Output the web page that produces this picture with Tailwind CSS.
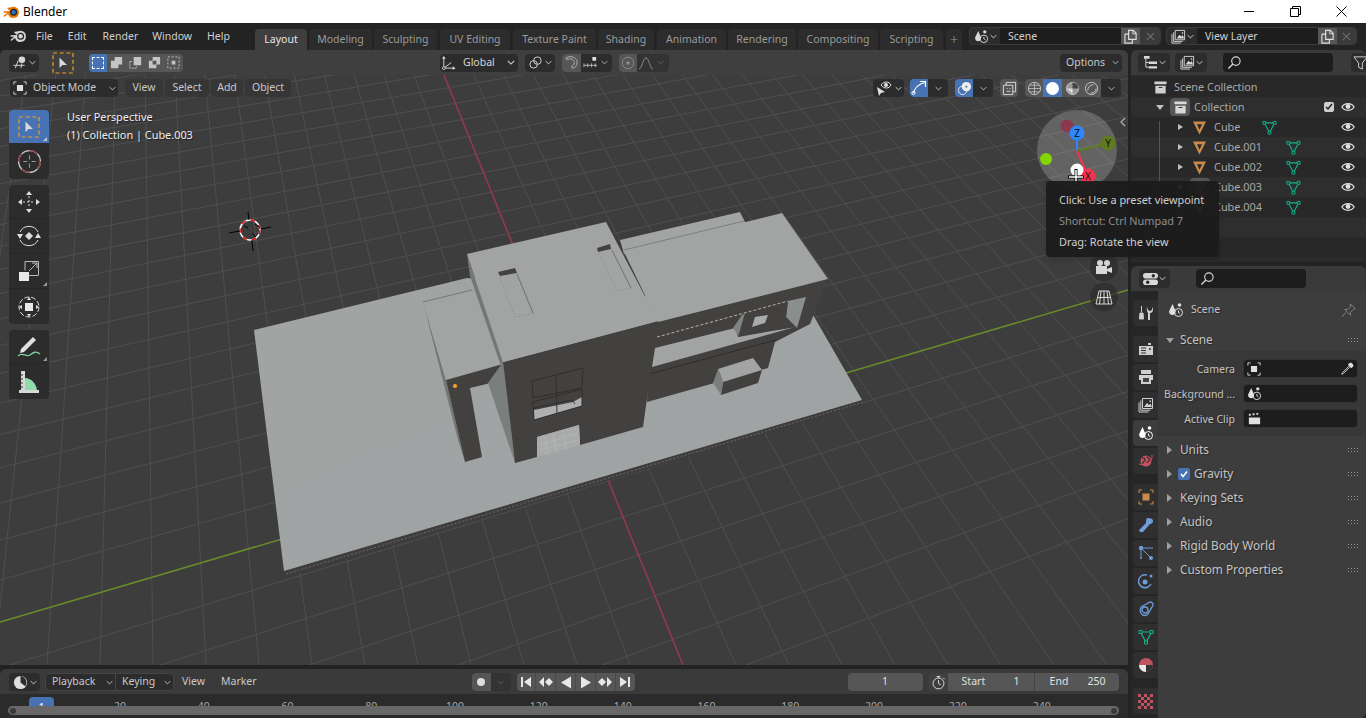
<!DOCTYPE html>
<html>
<head>
<meta charset="utf-8">
<title>Blender</title>
<script src="https://cdn.jsdelivr.net/npm/@tailwindcss/browser@4"></script>
</head>
<body class="relative w-[1366px] h-[718px] overflow-hidden bg-[#232323] flex flex-col text-[10.5px] text-[#c4c4c4] [font-family:'Noto_Sans',sans-serif]">

<!-- icon sheet -->
<svg class="hidden">
  <symbol id="chev" viewBox="0 0 10 6"><path d="M1 1l4 4 4-4" fill="none" stroke="currentColor" stroke-width="1.3"/></symbol>
  <symbol id="logo" viewBox="0 0 24 20"><path d="M15 2.5a8 8 0 1 1-8 10.5L2.5 16.5a1 1 0 0 1-1.4-1.6L6 11 1.5 11a1 1 0 0 1 0-2.2L10 8.5 6.5 5.6a1 1 0 0 1 1-1.8z" fill="currentColor"/><circle cx="15" cy="10.5" r="5" fill="#232323"/><circle cx="15" cy="10.5" r="3.2" fill="var(--dot,currentColor)"/></symbol>
  <symbol id="scene" viewBox="0 0 16 16"><path d="M4.5 2L7.5 9c.3 2.5-1.2 4-3.2 4S.8 11 1.2 9z" fill="currentColor"/><circle cx="11.5" cy="3" r="1.8" fill="currentColor"/><circle cx="10.5" cy="10.5" r="4" fill="none" stroke="currentColor"/><path d="M10.5 8.5v2l1.5 1" fill="none" stroke="currentColor"/></symbol>
  <symbol id="layer" viewBox="0 0 16 16"><path d="M4.5 1.5h10v10h-10z" fill="none" stroke="currentColor"/><path d="M6 10l3-4 2 2 1.5-1.5L14 10zM11.5 3.5h1.500v1.500h-1.500z" fill="currentColor"/><path d="M2.800 3.500v9.700h9.700M1 5.500V15h9.500" fill="none" stroke="currentColor"/></symbol>
  <symbol id="copy" viewBox="0 0 16 16"><path d="M6 1.500h5l3 3V11H6z M2 5.500h4M2 5.500V15h8v-4" fill="none" stroke="currentColor" stroke-width="1.200"/><path d="M10.500 1.500v3.500H14" fill="none" stroke="currentColor"/></symbol>
  <symbol id="xmark" viewBox="0 0 16 16"><path d="M3.500 3.500l9 9M12.500 3.500l-9 9" stroke="currentColor" stroke-width="1.300"/></symbol>
  <symbol id="search" viewBox="0 0 16 16"><circle cx="9.500" cy="6.500" r="4.500" fill="none" stroke="currentColor" stroke-width="1.200"/><path d="M6.300 9.700L1.500 14.500" stroke="currentColor" stroke-width="1.500"/></symbol>
  <symbol id="eye" viewBox="0 0 16 16"><path d="M1 8c3-5 11-5 14 0-3 5-11 5-14 0z" fill="none" stroke="currentColor" stroke-width="1.400"/><circle cx="8" cy="7.500" r="2.800" fill="currentColor"/></symbol>
  <symbol id="box" viewBox="0 0 16 16"><path d="M1.500 1.500h13v3h-13z M2.500 6h11v8.500h-11z" fill="currentColor"/><path d="M6 8h4" stroke="#333" stroke-width="1.200"/></symbol>
  <symbol id="tri" viewBox="0 0 16 16"><path d="M1 1.500h14L8 15.500zM5.300 4.500L8 10.500l2.700-6z" fill="currentColor" fill-rule="evenodd"/></symbol>
  <symbol id="mesh" viewBox="0 0 16 16"><path d="M2.500 3h11L8 13.500z" fill="none" stroke="currentColor" stroke-width="1.200"/><path d="M1 1.500h3v3H1zM12 1.500h3v3h-3zM6.500 12h3v3h-3z" fill="#2b2b2b" stroke="currentColor"/></symbol>
  <symbol id="obj" viewBox="0 0 16 16"><path d="M4.500 4.500h7v7h-7z" fill="currentColor"/><path d="M1 4V1h3M12 1h3v3M15 12v3h-3M4 15H1v-3" fill="none" stroke="currentColor"/></symbol>
  <symbol id="grip" viewBox="0 0 11 5"><path d="M0 0h1v1H0zM3 0h1v1H3zM6 0h1v1H6zM9 0h1v1H9zM0 3h1v1H0zM3 3h1v1H3zM6 3h1v1H6zM9 3h1v1H9z" fill="currentColor"/></symbol>
  <symbol id="axes" viewBox="0 0 16 16"><path d="M3 14V2M3 14L11 8M3 14h11" fill="none" stroke="currentColor"/><path d="M3 1l-2 3h4zM15.500 14l-3-2v4z" fill="currentColor"/><circle cx="3" cy="14" r="1.500" fill="#222" stroke="currentColor"/></symbol>
  <symbol id="selarrow" viewBox="0 0 22 22"><path d="M7.500 5.500v10.500l3-3h4.500z" fill="#d8d8d8"/><path d="M1 1h20v20H1z" fill="none" stroke="#f0a020" stroke-width="1.200" stroke-dasharray="4 2.700"/></symbol>
</svg>

<!-- title bar -->
<div class="h-[23px] shrink-0 bg-white flex items-center text-[12px] text-black">
  <svg class="w-[17px] h-[14px] ml-[3px] [--dot:#2a6fb8] text-[#ea7600]"><use href="#logo"/></svg>
  <span class="ml-[3px]">Blender</span>
  <div class="ml-auto mr-[2px] flex items-center text-[#111]">
    <div class="w-[46px] flex justify-center"><div class="w-[10px] h-px bg-black"></div></div>
    <div class="w-[46px] flex justify-center"><svg class="w-[11px] h-[11px]" viewBox="0 0 11 11"><path d="M.5 2.500h8v8h-8zM2.500 2.500v-2h8v8h-2" fill="none" stroke="#000"/></svg></div>
    <div class="w-[46px] flex justify-center"><svg class="w-[11px] h-[11px]" viewBox="0 0 11 11"><path d="M.5.500l10 10M10.500.500l-10 10" stroke="#000"/></svg></div>
  </div>
</div>

<!-- workspace bar -->
<div class="h-[27px] shrink-0 flex relative">
  <svg class="w-[17px] h-[14px] ml-[10px] mt-[6px] text-[#d6d6d6] [--dot:#d6d6d6]"><use href="#logo"/></svg>
  <div class="flex h-[27px] items-center text-[#d0d0d0] pt-[1px]">
    <span class="ml-[9px]">File</span><span class="ml-[15px]">Edit</span><span class="ml-[16px]">Render</span><span class="ml-[14px]">Window</span><span class="ml-[15px]">Help</span>
  </div>
  <div class="absolute left-[255px] top-[6px] flex gap-[2px] h-[21px] text-[#9a9a9a]">
    <div class="w-[52px] rounded-t-[4px] bg-[#3f3f3f] text-[#e6e6e6] flex items-center justify-center">Layout</div>
    <div class="w-[63px] rounded-t-[4px] bg-[#2c2c2c] flex items-center justify-center">Modeling</div>
    <div class="w-[63px] rounded-t-[4px] bg-[#2c2c2c] flex items-center justify-center">Sculpting</div>
    <div class="w-[70px] ml-px rounded-t-[4px] bg-[#2c2c2c] flex items-center justify-center">UV Editing</div>
    <div class="w-[83px] ml-px rounded-t-[4px] bg-[#2c2c2c] flex items-center justify-center">Texture Paint</div>
    <div class="w-[56px] rounded-t-[4px] bg-[#2c2c2c] flex items-center justify-center">Shading</div>
    <div class="w-[69px] ml-px rounded-t-[4px] bg-[#2c2c2c] flex items-center justify-center">Animation</div>
    <div class="w-[68px] rounded-t-[4px] bg-[#2c2c2c] flex items-center justify-center">Rendering</div>
    <div class="w-[80px] rounded-t-[4px] bg-[#2c2c2c] flex items-center justify-center">Compositing</div>
    <div class="w-[63px] rounded-t-[4px] bg-[#2c2c2c] flex items-center justify-center">Scripting</div>
    <div class="w-[16px] ml-px rounded-t-[4px] bg-[#2c2c2c] flex items-center justify-center text-[15px] font-light">+</div>
  </div>
  <!-- scene / view layer selectors -->
  <div class="absolute left-[969px] top-[4px] flex gap-[5px] h-[18px]">
    <div class="w-[192px] flex rounded-[4px] overflow-hidden bg-[#2c2c2c] border border-[#3a3a3a]">
      <div class="w-[30px] flex items-center justify-center gap-[1px] text-[#d8d8d8]"><svg class="w-[15px] h-[15px]"><use href="#scene"/></svg><svg class="w-[7px] h-[5px]"><use href="#chev"/></svg></div>
      <div class="w-[121px] bg-[#1d1d1d] pl-[8px] pt-[2px] flex items-center text-[#d0d0d0]">Scene</div>
      <div class="w-[19px] bg-[#565656] flex items-center justify-center text-[#e0e0e0]"><svg class="w-[15px] h-[15px]"><use href="#copy"/></svg></div>
      <div class="flex-1 bg-[#3a3a3a] flex items-center justify-center text-[#6e6e6e]"><svg class="w-[13px] h-[13px]"><use href="#xmark"/></svg></div>
    </div>
    <div class="w-[191px] flex rounded-[4px] overflow-hidden bg-[#2c2c2c] border border-[#3a3a3a]">
      <div class="w-[30px] flex items-center justify-center gap-[1px] text-[#d8d8d8]"><svg class="w-[15px] h-[15px]"><use href="#layer"/></svg><svg class="w-[7px] h-[5px]"><use href="#chev"/></svg></div>
      <div class="w-[121px] bg-[#1d1d1d] pl-[8px] pt-[2px] flex items-center text-[#d0d0d0]">View Layer</div>
      <div class="w-[19px] bg-[#565656] flex items-center justify-center text-[#e0e0e0]"><svg class="w-[15px] h-[15px]"><use href="#copy"/></svg></div>
      <div class="flex-1 bg-[#3a3a3a] flex items-center justify-center text-[#6e6e6e]"><svg class="w-[13px] h-[13px]"><use href="#xmark"/></svg></div>
    </div>
  </div>
</div>

<!-- main area -->
<div class="flex-1 flex gap-[3px] min-h-0">

  <!-- left column: viewport + timeline -->
  <div class="w-[1128px] flex flex-col gap-[4px]">
    <div class="relative h-[615px] rounded-t-[6px] overflow-hidden bg-[#3d3d3d]">
      <svg class="absolute inset-0 w-[1128px] h-[615px]" viewBox="0 50 1128 615">
        <g id="grid" stroke="#4f4f4f" stroke-width="1"></g>
        <line x1="444" y1="75" x2="683" y2="665" stroke="#96384a" stroke-width="1.500"/>
        <line x1="0" y1="622" x2="1128" y2="290" stroke="#688a28" stroke-width="1.500"/>
        <!-- base plate -->
        <defs><linearGradient id="pl" x1="0" y1="0" x2="1" y2="1"><stop offset="0" stop-color="#a2a4a4"/><stop offset="1" stop-color="#9fa3a3"/></linearGradient></defs>
        <polygon points="284,571 286,577 862,405 862,400" fill="#3f3d3b"/>
        <path d="M286,574 L862,402.500" stroke="#6a6a6a" stroke-dasharray="2 2" fill="none"/>
        <polygon points="254,330 467,278 812,313 862,400 284,571" fill="url(#pl)"/>
        <!-- rear roof strip -->
        <polygon points="620,240 740,212 746,224 624,254" fill="#a2a4a4"/>
        <line x1="624" y1="250" x2="744" y2="221" stroke="#7d7f7f"/>
        <!-- right block, dark front -->
        <polygon points="655,322 828,279 810,324 775,342 768,368 647,402 650,340" fill="#43413f"/>
        <polygon points="655,348 735,328 738,337 795,327 652,367" fill="#a2a4a4"/>
        <line x1="649" y1="374" x2="776" y2="340" stroke="#2e2d2c"/>
        <polygon points="733,328 742,315 746,313 739,337" fill="#7f8482"/>
        <polygon points="745,313 778,303 776,327 738,337" fill="#43413f"/>
        <polygon points="755,317 768,315 765,323 752,327" fill="#a8abab"/>
        <polygon points="788,301 806,297 797,328 786,317" fill="#8a8f8d"/>
        <polygon points="778,303 788,301 786,317 795,327 776,330" fill="#43413f"/>
        <polygon points="624,252 782,213 828,279 658,322" fill="#a2a4a4"/>
        <path d="M657,337 L788,301" stroke="#cfcfcf" stroke-dasharray="3 2" stroke-width=".8" fill="none"/>
        <!-- small box -->
        <polygon points="718,369 753,358 762,370 723,382" fill="#a2a4a4"/>
        <polygon points="723,382 762,370 758,383 721,395" fill="#43413f"/>
        <polygon points="718,369 723,382 721,395 713,383" fill="#7a7f7d"/>
        <!-- canopy -->
        <polygon points="423,302 446,380 465,462 458,440" fill="#737775"/>
        <polygon points="423,302 472,290 503,362 446,380" fill="#a2a4a4"/>
        <path d="M423,302 L472,290" stroke="#757777"/>
        <polygon points="446,380 503,364 503,380 470,388 482,457 465,462" fill="#43413f"/>
        <polygon points="488,383 503,362 515,463" fill="#7a7f7d"/>
        <!-- main block -->
        <polygon points="467,254 503,362 503,372 470,276" fill="#737775"/>
        <polygon points="503,362 658,321 643,427 580,445 579,425 537,437 537,457 515,463" fill="#43413f"/>
        <polygon points="537,437 579,425 580,445 537,457" fill="#a9abab"/>
        <path d="M545,437L548,456M553,434L557,454M563,431L566,451M540,445L578,433M540,450L578,440" stroke="#c4c4c4" stroke-width=".7" stroke-dasharray="1 1"/>
        <polygon points="467,254 606,222 658,321 503,362" fill="#a2a4a4"/>
        <!-- skylights -->
        <polygon points="498,272 515,268 517,273 500,276" fill="#43413f"/>
        <path d="M517,274L533,313" stroke="#6e6f6f"/>
        <path d="M533,313L515,317M500,277L515,317" stroke="#8b8d8d" stroke-dasharray="1.500 2"/>
        <polygon points="597,248 610,244 611,249 598,252" fill="#43413f"/>
        <path d="M612,250L631,288" stroke="#6e6f6f"/>
        <path d="M631,288L617,291M599,253L617,291" stroke="#8b8d8d" stroke-dasharray="1.500 2"/>
        <!-- windows -->
        <polygon points="534,410 573,402 582,397 582,406 534,420" fill="#aeb0b0"/>
        <path d="M532,381L583,368L582,388L533,398ZM533,402L582,389L582,406L534,420ZM556,375L557,413M534,408L572,400L575,404" fill="none" stroke="#2f2e2d"/>
        <circle cx="455" cy="386" r="2.500" fill="#f5a030" stroke="#222" stroke-width=".6"/>
        <!-- 3d cursor -->
        <circle cx="250" cy="230" r="10" fill="none" stroke="#fff" stroke-width="1.500"/>
        <circle cx="250" cy="230" r="10" fill="none" stroke="#e01010" stroke-width="1.500" stroke-dasharray="4.500 5"/>
        <path d="M229,233L240,231M248,212L249,220M261,229L271,227M252,240L253,251M244,226L248,228M252,233L256,237M255,224L259,227" stroke="#000" stroke-width="1"/>
        <!-- gizmo -->
        <circle cx="1077" cy="150" r="40" fill="#fff" fill-opacity=".2"/>
        <circle cx="1067" cy="126" r="6.500" fill="#8a3a4c"/>
        <path d="M1077,150V133" stroke="#2e86ff" stroke-width="2"/>
        <path d="M1077,151L1108,143" stroke="#5f7a1f" stroke-width="2"/>
        <path d="M1077,151L1088,176" stroke="#f5334f" stroke-width="2"/>
        <circle cx="1046" cy="159" r="6" fill="#84d600"/>
        <circle cx="1077" cy="133" r="7.500" fill="#2e86ff"/>
        <circle cx="1108" cy="143" r="7.500" fill="#5f7a1f"/>
        <circle cx="1088" cy="176" r="7.500" fill="#f5334f"/>
        <circle cx="1077" cy="170" r="6.500" fill="#fff"/>
        <text x="1077" y="137" text-anchor="middle" font-size="10" fill="#111">Z</text>
        <text x="1108" y="147" text-anchor="middle" font-size="10" fill="#111">Y</text>
        <text x="1088" y="180" text-anchor="middle" font-size="10" fill="#111">X</text>
        <path d="M1068,177H1084M1076,169V185" stroke="#000" stroke-width="3"/>
        <path d="M1069,177H1083M1076,170V184" stroke="#fff" stroke-width="1.500"/>
        <!-- nav buttons -->
        <circle cx="1104" cy="205" r="14" fill="#2c2c2c" fill-opacity=".7"/>
        <circle cx="1104" cy="235" r="14" fill="#2c2c2c" fill-opacity=".7"/>
        <circle cx="1104" cy="267" r="14" fill="#2c2c2c" fill-opacity=".7"/>
        <circle cx="1104" cy="297" r="14" fill="#2c2c2c" fill-opacity=".7"/>
        <path d="M1096,266h11v8h-11zM1107,269l5-2v6l-5-2z" fill="#d8d8d8"/><circle cx="1100" cy="263" r="3" fill="#d8d8d8"/><circle cx="1107" cy="263" r="3" fill="#d8d8d8"/>
        <path d="M1099,291h10l3,13h-16zM1104,291v13M1097.500,297.500h13M1101,291l-1.500,13M1107,291l1.500,13" fill="none" stroke="#d8d8d8"/>
        <path d="M1125,118l-4,4 4,4" fill="none" stroke="#b0b0b0" stroke-width="1.200"/>
      </svg>

      <!-- tool header -->
      <div class="relative h-[25px] bg-[#3f3f3f] flex items-center">
        <div class="ml-[9px] w-[30px] h-[18px] rounded-[4px] bg-[#2c2c2c] flex items-center justify-center gap-[1px] text-[#d8d8d8]">
          <svg class="w-[16px] h-[15px]" viewBox="0 0 16 16"><path d="M1 11h12M3 14l3-8M9 14l1-5" stroke="currentColor" fill="none"/><circle cx="10" cy="5" r="3.500" fill="currentColor"/></svg>
          <svg class="w-[7px] h-[5px]"><use href="#chev"/></svg>
        </div>
        <svg class="ml-[13px] w-[22px] h-[22px]"><use href="#selarrow"/></svg>
        <div class="ml-[15px] w-[94px] h-[18px] rounded-[4px] overflow-hidden flex bg-[#565656] text-[#d8d8d8]">
          <div class="w-[18px] bg-[#4772b3] flex items-center justify-center"><div class="w-[12px] h-[12px] border border-dashed border-white"></div></div>
          <div class="flex-1 flex items-center justify-center"><svg class="w-[15px] h-[15px]" viewBox="0 0 16 16"><path d="M6 2h8v8H10v4H2V6h4z" fill="#c4c4c4"/></svg></div>
          <div class="flex-1 flex items-center justify-center"><svg class="w-[15px] h-[15px]" viewBox="0 0 16 16"><path d="M6 2h8v9H6z" fill="#c4c4c4"/><path d="M2 7h3M2 7v7h7v-2" fill="none" stroke="#c4c4c4" stroke-dasharray="2 1"/></svg></div>
          <div class="flex-1 flex items-center justify-center"><svg class="w-[15px] h-[15px]" viewBox="0 0 16 16"><path d="M6 2h8v8H10v4H2V6h4zM6 6v4h4V6z" fill="#c4c4c4" fill-rule="evenodd"/></svg></div>
          <div class="flex-1 flex items-center justify-center"><svg class="w-[15px] h-[15px]" viewBox="0 0 16 16"><path d="M6 6h4v4H6z" fill="#c4c4c4"/><path d="M2 2h12v12H2z" fill="none" stroke="#c4c4c4" stroke-dasharray="2 2"/></svg></div>
        </div>
        <div class="ml-[257px] w-[78px] h-[18px] rounded-[4px] bg-[#2c2c2c] flex items-center text-[#d8d8d8]">
          <svg class="w-[15px] h-[15px] ml-[1px]"><use href="#axes"/></svg><span class="ml-[7px]">Global</span><svg class="w-[8px] h-[5px] ml-auto mr-[3px]"><use href="#chev"/></svg>
        </div>
        <div class="ml-[7px] w-[30px] h-[18px] rounded-[4px] bg-[#2c2c2c] flex items-center justify-center gap-[2px] text-[#d8d8d8]">
          <svg class="w-[15px] h-[15px]" viewBox="0 0 16 16"><circle cx="6" cy="10" r="4" fill="none" stroke="currentColor"/><circle cx="10" cy="6" r="4" fill="none" stroke="currentColor"/></svg>
          <svg class="w-[7px] h-[5px]"><use href="#chev"/></svg>
        </div>
        <div class="ml-[7px] w-[50px] h-[18px] rounded-[4px] bg-[#2c2c2c] overflow-hidden flex items-center text-[#b8b8b8]">
          <div class="w-[19px] h-full bg-[#565656] flex items-center justify-center"><svg class="w-[15px] h-[15px]" viewBox="0 0 16 16"><path d="M2 3c6-3 12 0 12 5 0 3-2 6-5 6l-1-2c2-1 3-2 3-4 0-3-4-5-8-3z" fill="none" stroke="currentColor"/></svg></div>
          <svg class="w-[15px] h-[15px] ml-[2px]" viewBox="0 0 16 16"><path d="M1 11h14M1 9v4M5 9v4M9 9v4M13 9v4" stroke="currentColor" fill="none"/><path d="M10 2h4v4h-4z" fill="#e0e0e0"/></svg>
          <svg class="w-[7px] h-[5px] ml-[3px]"><use href="#chev"/></svg>
        </div>
        <div class="ml-[7px] w-[50px] h-[18px] rounded-[4px] bg-[#333] overflow-hidden flex items-center text-[#8e8e8e]">
          <div class="w-[18px] h-full bg-[#565656] flex items-center justify-center"><svg class="w-[14px] h-[14px]" viewBox="0 0 16 16"><circle cx="8" cy="8" r="6.500" fill="none" stroke="currentColor"/><circle cx="8" cy="8" r="2" fill="currentColor"/></svg></div>
          <svg class="w-[16px] h-[16px] ml-[1px]" viewBox="0 0 16 16"><path d="M1 14c3 0 4-11 7-11s4 11 7 11" fill="none" stroke="currentColor"/></svg>
          <svg class="w-[7px] h-[5px] ml-[3px] text-[#666]"><use href="#chev"/></svg>
        </div>
        <div class="ml-[391px] w-[62px] h-[18px] rounded-[4px] bg-[#2c2c2c] flex items-center text-[#c8c8c8]">
          <span class="ml-[6px]">Options</span><svg class="w-[7px] h-[5px] ml-auto mr-[3px]"><use href="#chev"/></svg>
        </div>
      </div>

      <!-- viewport header row -->
      <div class="relative mt-[4px] h-[18px] flex items-stretch text-[#c8c8c8]">
        <div class="ml-[10px] w-[108px] rounded-[4px] bg-[#2c2c2c] flex items-center">
          <svg class="w-[14px] h-[14px] ml-[3px] text-[#e0e0e0]"><use href="#obj"/></svg><span class="ml-[6px]">Object Mode</span><svg class="w-[7px] h-[5px] ml-auto mr-[2px]"><use href="#chev"/></svg>
        </div>
        <div class="ml-[7px] w-[38px] rounded-[4px] bg-[#363636] flex items-center justify-center">View</div>
        <div class="ml-[2px] w-[44px] rounded-[4px] bg-[#363636] flex items-center justify-center">Select</div>
        <div class="ml-[2px] w-[32px] rounded-[4px] bg-[#363636] flex items-center justify-center">Add</div>
        <div class="ml-[2px] w-[46px] rounded-[4px] bg-[#363636] flex items-center justify-center">Object</div>

        <div class="ml-[582px] w-[31px] rounded-[4px] bg-[#2c2c2c] flex items-center justify-center gap-[3px] text-[#e0e0e0]">
          <svg class="w-[17px] h-[15px]" viewBox="0 0 17 15"><path d="M6 4c3-4 8-4 10 0-2 4-7 4-10 0z" fill="none" stroke="currentColor"/><circle cx="11" cy="4" r="2" fill="currentColor"/><path d="M2 6l2 9 2-3 4-1z" fill="currentColor"/></svg>
          <svg class="w-[7px] h-[5px]"><use href="#chev"/></svg>
        </div>
        <div class="ml-[6px] w-[38px] rounded-[4px] overflow-hidden bg-[#2c2c2c] flex items-center">
          <div class="w-[18px] h-full bg-[#4772b3] flex items-center justify-center"><svg class="w-[16px] h-[16px]" viewBox="0 0 16 16"><path d="M2.500 13C4 7 8 4 14 2.500M9 1.500h5.500V7" fill="none" stroke="#fff" stroke-width="1.200"/><circle cx="2.500" cy="13" r="1.600" fill="none" stroke="#fff"/></svg></div>
          <svg class="w-[7px] h-[5px] mx-auto"><use href="#chev"/></svg>
        </div>
        <div class="ml-[7px] w-[38px] rounded-[4px] overflow-hidden bg-[#2c2c2c] flex items-center">
          <div class="w-[18px] h-full bg-[#4772b3] flex items-center justify-center"><svg class="w-[15px] h-[15px]" viewBox="0 0 16 16"><circle cx="10" cy="6" r="5" fill="#eee"/><circle cx="6" cy="10" r="4.500" fill="none" stroke="#eee"/><path d="M9 5h2v2H9z" fill="#4772b3"/></svg></div>
          <svg class="w-[7px] h-[5px] mx-auto"><use href="#chev"/></svg>
        </div>
        <div class="ml-[7px] w-[18px] rounded-[4px] bg-[#565656] flex items-center justify-center"><svg class="w-[15px] h-[15px]" viewBox="0 0 16 16"><path d="M4.500 4.500v-3h10v10h-3M1.500 4.500h10v10h-10z" fill="none" stroke="#ddd"/><path d="M5 8h1M8 8h1M5 11h4" stroke="#ddd"/></svg></div>
        <div class="ml-[7px] w-[96px] rounded-[4px] overflow-hidden bg-[#2c2c2c] flex items-center">
          <div class="w-[18px] h-full bg-[#565656] flex items-center justify-center"><svg class="w-[15px] h-[15px]" viewBox="0 0 16 16"><circle cx="8" cy="8" r="6.500" fill="none" stroke="#ccc"/><path d="M1.500 8h13M8 1.500v13M3 4.500h10M3 11.500h10" fill="none" stroke="#ccc" stroke-width=".8"/></svg></div>
          <div class="w-[19px] h-full bg-[#4772b3] flex items-center justify-center"><div class="w-[13px] h-[13px] rounded-full bg-white"></div></div>
          <div class="w-[20px] h-full bg-[#565656] flex items-center justify-center"><svg class="w-[15px] h-[15px]" viewBox="0 0 16 16"><circle cx="8" cy="8" r="6.500" fill="#999" stroke="#ccc"/><path d="M8 1.500v6.500h6.500A6.500 6.500 0 0 0 8 1.500z" fill="#444"/><path d="M2 8h6v6" fill="#ddd"/></svg></div>
          <div class="w-[19px] h-full bg-[#565656] flex items-center justify-center"><svg class="w-[15px] h-[15px]" viewBox="0 0 16 16"><circle cx="8" cy="8" r="6.500" fill="none" stroke="#ccc"/><path d="M4 10a6 6 0 0 1 6-6M7 13a6 6 0 0 0 6-5" fill="none" stroke="#ccc"/></svg></div>
          <svg class="w-[7px] h-[5px] mx-auto"><use href="#chev"/></svg>
        </div>
      </div>

      <!-- toolbar -->
      <div class="absolute left-[9px] top-[60px] w-[40px] flex flex-col gap-[6px] text-[#d8d8d8]">
        <div class="flex flex-col rounded-[4px] overflow-hidden bg-[#2c2c2c]">
          <div class="h-[33px] bg-[#4772b3] flex items-center justify-center relative">
            <svg class="w-[22px] h-[22px]"><use href="#selarrow"/></svg>
            <div class="absolute right-[2px] bottom-[2px] w-0 h-0 border-l-[4px] border-b-[4px] border-l-transparent border-b-[#b8c8e0]"></div>
          </div>
          <div class="h-[36px] flex items-center justify-center">
            <svg class="w-[25px] h-[25px]" viewBox="0 0 24 24"><circle cx="12" cy="12" r="10.500" fill="none" stroke="#c4c4c4" stroke-width="1.200"/><circle cx="12" cy="12" r="10.500" fill="none" stroke="#8e3a40" stroke-width="1.200" stroke-dasharray="8 8.500"/><path d="M12 6v4M12 14v4M6 12h4M14 12h4" stroke="#999"/></svg>
          </div>
        </div>
        <div class="flex flex-col rounded-[4px] overflow-hidden bg-[#2c2c2c] divide-y divide-[#262626]">
          <div class="h-[34px] flex items-center justify-center"><svg class="w-[24px] h-[24px]" viewBox="0 0 24 24"><path d="M12 1l3 4H9zM12 23l-3-4h6zM1 12l4-3v6zM23 12l-4 3V9z" fill="#ddd"/><path d="M12 6v12M6 12h12" stroke="#ddd" stroke-dasharray="2 2"/></svg></div>
          <div class="h-[35px] flex items-center justify-center"><svg class="w-[24px] h-[24px]" viewBox="0 0 24 24"><path d="M3 8a10 10 0 0 1 18 0M21 16a10 10 0 0 1-18 0" fill="none" stroke="#ddd"/><path d="M12 8l4 4-4 4-4-4zM0 10h6l-3 5zM18 14h6l-3-5z" fill="#ddd"/></svg></div>
          <div class="h-[35px] flex items-center justify-center relative"><svg class="w-[22px] h-[22px]" viewBox="0 0 22 22"><path d="M7 1.500h13.500v13.500" fill="none" stroke="#bbb"/><path d="M1 12h10v9H1z" fill="#e8e8e8"/><path d="M7 1.500v9M11 15.500h9.500M11 11l8-8M14 3h5v5" fill="none" stroke="#bbb"/></svg><div class="absolute right-[2px] bottom-[2px] w-0 h-0 border-l-[4px] border-b-[4px] border-l-transparent border-b-[#999]"></div></div>
          <div class="h-[35px] flex items-center justify-center"><svg class="w-[24px] h-[24px]" viewBox="0 0 24 24"><path d="M8 8h8v8H8z" fill="#e8e8e8"/><circle cx="12" cy="12" r="10" fill="none" stroke="#ddd" stroke-dasharray="5 2"/><path d="M12 2l2 3h-4zM12 22l-2-3h4zM2 12l3-2v4zM22 12l-3 2v-4z" fill="#ddd"/></svg></div>
        </div>
        <div class="flex flex-col rounded-[4px] overflow-hidden bg-[#2c2c2c] divide-y divide-[#262626]">
          <div class="h-[34px] flex items-center justify-center relative"><svg class="w-[26px] h-[26px]" viewBox="0 0 26 26"><path d="M5 15L17 3l3 3L8 18l-4 1z" fill="#e0e0e0"/><path d="M2 22c4-5 8 2 12-1s6-4 10-1" fill="none" stroke="#7fd0a0" stroke-width="1.300"/></svg><div class="absolute right-[2px] bottom-[2px] w-0 h-0 border-l-[4px] border-b-[4px] border-l-transparent border-b-[#999]"></div></div>
          <div class="h-[35px] flex items-center justify-center"><svg class="w-[24px] h-[24px]" viewBox="0 0 24 24"><path d="M4 1h4v19H4zM2 20h20v3H2z" fill="#d8d8d8"/><path d="M8 8c6 0 11 5 12 12H8z" fill="#8fdcac"/><path d="M4 5h2M4 9h2M4 13h2M4 17h2" stroke="#333"/></svg></div>
        </div>
      </div>

      <!-- view name -->
      <div class="absolute left-[67px] top-[58px] text-[10.9px] leading-[18px] text-[#eeeeee] [text-shadow:1px_1px_1px_#222]">
        <div>User Perspective</div>
        <div>(1) Collection | Cube.003</div>
      </div>
    </div>

    <!-- timeline -->
    <div class="h-[49px] rounded-t-[6px] overflow-hidden flex flex-col bg-[#2b2b2b]">
      <div class="h-[25px] shrink-0 pt-[1px] bg-[#3a3a3a] flex items-center text-[#c8c8c8]">
        <div class="ml-[9px] w-[31px] h-[18px] rounded-[4px] bg-[#2c2c2c] flex items-center justify-center gap-[2px] text-[#ddd]">
          <svg class="w-[15px] h-[15px]" viewBox="0 0 16 16"><circle cx="8" cy="8" r="7" fill="currentColor"/><path d="M8 1v7l5 4A7 7 0 0 0 8 1z" fill="#2c2c2c"/></svg>
          <svg class="w-[7px] h-[5px]"><use href="#chev"/></svg>
        </div>
        <div class="ml-[5px] w-[129px] h-[18px] rounded-[4px] bg-[#2c2c2c] border border-[#444] flex">
          <div class="w-[70px] flex items-center border-r border-[#444]"><span class="ml-[6px]">Playback</span><svg class="w-[7px] h-[5px] ml-auto mr-[2px]"><use href="#chev"/></svg></div>
          <div class="flex-1 flex items-center"><span class="ml-[6px]">Keying</span><svg class="w-[7px] h-[5px] ml-auto mr-[2px]"><use href="#chev"/></svg></div>
        </div>
        <span class="ml-[8px]">View</span>
        <span class="ml-[16px]">Marker</span>
        <div class="ml-[215px] w-[39px] h-[18px] rounded-[4px] overflow-hidden bg-[#333] flex">
          <div class="w-[19px] bg-[#565656] flex items-center justify-center"><div class="w-[8px] h-[8px] rounded-full bg-[#ddd]"></div></div>
          <div class="flex-1 flex items-center justify-center text-[#666]"><svg class="w-[7px] h-[5px]"><use href="#chev"/></svg></div>
        </div>
        <div class="ml-[6px] w-[118px] h-[18px] rounded-[4px] overflow-hidden bg-[#565656] flex text-[#e8e8e8] divide-x divide-[#4a4a4a]">
          <div class="flex-1 flex items-center justify-center"><svg class="w-[12px] h-[12px]" viewBox="0 0 12 12"><path d="M1 1h2v10H1zM11 1v10L4 6z" fill="currentColor"/></svg></div>
          <div class="flex-1 flex items-center justify-center"><svg class="w-[16px] h-[12px]" viewBox="0 0 16 12"><path d="M7 6l4-4 4 4-4 4zM6 1v10L1 6z" fill="currentColor"/></svg></div>
          <div class="flex-1 flex items-center justify-center"><svg class="w-[12px] h-[13px]" viewBox="0 0 12 12"><path d="M11 0v12L1 6z" fill="currentColor"/></svg></div>
          <div class="flex-1 flex items-center justify-center"><svg class="w-[12px] h-[13px]" viewBox="0 0 12 12"><path d="M1 0v12l10-6z" fill="currentColor"/></svg></div>
          <div class="flex-1 flex items-center justify-center"><svg class="w-[16px] h-[12px]" viewBox="0 0 16 12"><path d="M9 6L5 2 1 6l4 4zM10 1v10l5-5z" fill="currentColor"/></svg></div>
          <div class="flex-1 flex items-center justify-center"><svg class="w-[12px] h-[12px]" viewBox="0 0 12 12"><path d="M11 1H9v10h2zM1 1v10l7-5z" fill="currentColor"/></svg></div>
        </div>
        <div class="ml-[213px] w-[75px] h-[18px] rounded-[4px] bg-[#565656] flex items-center justify-center text-[#e0e0e0]">1</div>
        <div class="ml-[6px] w-[190px] h-[18px] rounded-[4px] overflow-hidden bg-[#565656] flex text-[#e0e0e0]">
          <div class="w-[19px] bg-[#3f3f3f] flex items-center justify-center"><svg class="w-[15px] h-[15px]" viewBox="0 0 16 16"><circle cx="8" cy="9" r="5.800" fill="none" stroke="currentColor"/><path d="M8 5.500V9l2.500 1.500M6 1.500h4M8 1.500v2M13 3l1.500 1.500" fill="none" stroke="currentColor"/></svg></div>
          <div class="w-[87px] flex items-center justify-between px-[14px] border-r border-[#444]"><span>Start</span><span>1</span></div>
          <div class="flex-1 flex items-center justify-between pl-[15px] pr-[13px]"><span>End</span><span>250</span></div>
        </div>
      </div>
      <div class="relative flex-1 overflow-hidden">
        <div class="flex ml-[78px] pt-[5px] text-[#a8a8a8]">
          <span class="w-[83.800px] text-center">20</span><span class="w-[83.800px] text-center">40</span><span class="w-[83.800px] text-center">60</span><span class="w-[83.800px] text-center">80</span><span class="w-[83.800px] text-center">100</span><span class="w-[83.800px] text-center">120</span><span class="w-[83.800px] text-center">140</span><span class="w-[83.800px] text-center">160</span><span class="w-[83.800px] text-center">180</span><span class="w-[83.800px] text-center">200</span><span class="w-[83.800px] text-center">220</span><span class="w-[83.800px] text-center">240</span>
        </div>
        <div class="absolute left-[29px] top-[3px] w-[25px] h-[12px] pt-[3px] rounded-t-[4px] bg-[#4772b3] text-center text-white leading-[14px]">1</div>
        <div class="absolute left-[8px] top-[12px] w-[1111px] h-[9px] rounded-full bg-[#686868] flex items-center justify-between px-[2px]">
          <div class="w-[6px] h-[6px] rounded-full bg-[#3a3a3a]"></div><div class="w-[6px] h-[6px] rounded-full bg-[#3a3a3a]"></div>
        </div>
      </div>
    </div>
  </div>

  <!-- right column: outliner + properties -->
  <div class="flex-1 flex flex-col gap-[4px] min-w-0">
    <!-- outliner -->
    <div class="h-[212px] rounded-t-[6px] overflow-hidden bg-[#2b2b2b] flex flex-col">
      <div class="h-[25px] shrink-0 bg-[#3a3a3a] flex items-center text-[#d8d8d8]">
        <div class="ml-[7px] shrink-0 w-[32px] h-[19px] rounded-[4px] bg-[#2c2c2c] flex items-center justify-center gap-[1px]">
          <svg class="w-[15px] h-[15px]" viewBox="0 0 16 16"><path d="M1 1h6v3H1zM6 7h9v2.500H6zM6 12h9v2.500H6z" fill="currentColor"/><path d="M3 4v9h3M3 8h3" fill="none" stroke="currentColor"/></svg>
          <svg class="w-[7px] h-[5px]"><use href="#chev"/></svg>
        </div>
        <div class="ml-[5px] shrink-0 w-[32px] h-[19px] rounded-[4px] bg-[#2c2c2c] flex items-center justify-center gap-[1px]">
          <svg class="w-[15px] h-[15px]"><use href="#layer"/></svg>
          <svg class="w-[7px] h-[5px]"><use href="#chev"/></svg>
        </div>
        <div class="ml-[16px] shrink-0 w-[110px] h-[19px] rounded-[4px] bg-[#1d1d1d] flex items-center">
          <svg class="w-[15px] h-[15px] ml-[4px]"><use href="#search"/></svg>
        </div>
        <div class="ml-[18px] shrink-0 w-[24px] h-[19px] rounded-l-[4px] bg-[#2c2c2c] flex items-center pl-[2px]">
          <svg class="w-[15px] h-[15px]" viewBox="0 0 16 16"><path d="M1 2h14L10 8.500V15l-4-2V8.500z" fill="none" stroke="currentColor"/></svg>
        </div>
      </div>
      <div class="h-[2px] shrink-0"></div>
      <div class="relative flex flex-col text-[10.9px] leading-[16px] text-[#a8a8a8]">
        <div class="h-[20px] flex items-center bg-[#282828]">
          <svg class="ml-[22px] w-[15px] h-[15px] text-[#d0d0d0]"><use href="#box"/></svg>
          <span class="ml-[6px]">Scene Collection</span>
        </div>
        <div class="h-[20px] flex items-center bg-[#2e2e2e]">
          <span class="ml-[25px] w-0 h-0 border-x-[4px] border-t-[5px] border-x-transparent border-t-[#c0c0c0]"></span>
          <div class="ml-[6px] w-[20px] h-[18px] rounded-[4px] bg-[#565656] flex items-center justify-center"><svg class="w-[15px] h-[15px] text-[#d8d8d8]"><use href="#box"/></svg></div>
          <span class="ml-[4px]">Collection</span>
          <div class="ml-auto mr-[11px] w-[31px] flex items-center justify-between">
            <div class="w-[10px] h-[10px] rounded-[2px] bg-[#cfcfcf] flex items-center justify-center"><svg class="w-[8px] h-[8px]" viewBox="0 0 8 8"><path d="M1 4l2 2 4-5" fill="none" stroke="#222" stroke-width="1.500"/></svg></div>
            <svg class="w-[14px] h-[14px] text-[#e0e0e0]"><use href="#eye"/></svg>
          </div>
        </div>
        <div class="h-[20px] flex items-center bg-[#282828]">
          <span class="ml-[47px] w-0 h-0 border-y-[3.500px] border-l-[5px] border-y-transparent border-l-[#c0c0c0]"></span>
          <svg class="ml-[9px] w-[15px] h-[15px] text-[#c98a4b]"><use href="#tri"/></svg>
          <span class="ml-[7px] w-[31px]">Cube</span>
          <svg class="ml-[16.500px] w-[15px] h-[15px] text-[#10b58c]"><use href="#mesh"/></svg>
          <svg class="ml-auto mr-[11px] w-[14px] h-[14px] text-[#e0e0e0]"><use href="#eye"/></svg>
        </div>
        <div class="h-[20px] flex items-center bg-[#2e2e2e]">
          <span class="ml-[47px] w-0 h-0 border-y-[3.500px] border-l-[5px] border-y-transparent border-l-[#c0c0c0]"></span>
          <svg class="ml-[9px] w-[15px] h-[15px] text-[#c98a4b]"><use href="#tri"/></svg>
          <span class="ml-[7px] w-[55px]">Cube.001</span>
          <svg class="ml-[16.500px] w-[15px] h-[15px] text-[#10b58c]"><use href="#mesh"/></svg>
          <svg class="ml-auto mr-[11px] w-[14px] h-[14px] text-[#e0e0e0]"><use href="#eye"/></svg>
        </div>
        <div class="h-[20px] flex items-center bg-[#282828]">
          <span class="ml-[47px] w-0 h-0 border-y-[3.500px] border-l-[5px] border-y-transparent border-l-[#c0c0c0]"></span>
          <svg class="ml-[9px] w-[15px] h-[15px] text-[#c98a4b]"><use href="#tri"/></svg>
          <span class="ml-[7px] w-[55px]">Cube.002</span>
          <svg class="ml-[16.500px] w-[15px] h-[15px] text-[#10b58c]"><use href="#mesh"/></svg>
          <svg class="ml-auto mr-[11px] w-[14px] h-[14px] text-[#e0e0e0]"><use href="#eye"/></svg>
        </div>
        <div class="h-[20px] flex items-center bg-[#2e2e2e]">
          <span class="ml-[47px] w-0 h-0 border-y-[3.500px] border-l-[5px] border-y-transparent border-l-[#c0c0c0]"></span>
          <div class="ml-[7px] w-[20px] h-[18px] rounded-[4px] bg-[#565656] flex items-center justify-center"><svg class="w-[15px] h-[15px] text-[#c98a4b]"><use href="#tri"/></svg></div>
          <span class="ml-[4px] w-[55px]">Cube.003</span>
          <svg class="ml-[16.500px] w-[15px] h-[15px] text-[#10b58c]"><use href="#mesh"/></svg>
          <svg class="ml-auto mr-[11px] w-[14px] h-[14px] text-[#e0e0e0]"><use href="#eye"/></svg>
        </div>
        <div class="h-[20px] flex items-center bg-[#282828]">
          <span class="ml-[47px] w-0 h-0 border-y-[3.500px] border-l-[5px] border-y-transparent border-l-[#c0c0c0]"></span>
          <svg class="ml-[9px] w-[15px] h-[15px] text-[#c98a4b]"><use href="#tri"/></svg>
          <span class="ml-[7px] w-[55px]">Cube.004</span>
          <svg class="ml-[16.500px] w-[15px] h-[15px] text-[#10b58c]"><use href="#mesh"/></svg>
          <svg class="ml-auto mr-[11px] w-[14px] h-[14px] text-[#e0e0e0]"><use href="#eye"/></svg>
        </div>
        <div class="h-[20px] bg-[#2e2e2e]"></div>
        <div class="h-[20px] bg-[#282828]"></div>
        <div class="absolute left-[28px] top-[44px] w-px h-[70px] bg-[#555]"></div>
      </div>
    </div>

    <!-- properties -->
    <div class="flex-1 rounded-t-[6px] rounded-br-[6px] overflow-hidden flex flex-col bg-[#3a3a3a]">
      <div class="h-[25px] shrink-0 flex items-center text-[#d8d8d8]">
        <div class="ml-[8px] w-[31px] h-[19px] rounded-[4px] bg-[#2c2c2c] flex items-center justify-center gap-[1px]">
          <svg class="w-[15px] h-[15px]" viewBox="0 0 16 16"><path d="M3 2h10a3 3 0 0 1 0 6H3a3 3 0 0 1 0-6zM3 9h10a3 3 0 0 1 0 6H3a3 3 0 0 1 0-6z" fill="currentColor"/><circle cx="11" cy="5" r="1.800" fill="#2c2c2c"/><circle cx="5" cy="12" r="1.800" fill="#2c2c2c"/></svg>
          <svg class="w-[7px] h-[5px]"><use href="#chev"/></svg>
        </div>
        <div class="ml-[26px] w-[110px] h-[19px] rounded-[4px] bg-[#1d1d1d] flex items-center">
          <svg class="w-[15px] h-[15px] ml-[4px]"><use href="#search"/></svg>
        </div>
      </div>
      <div class="flex-1 flex min-h-0">
        <!-- tabs -->
        <div class="w-[27px] shrink-0 bg-[#262626] flex flex-col pt-[9px] pl-[2px] text-[#cfcfcf]">
          <div class="h-[26px] rounded-l-[4px] bg-[#2f2f2f] flex items-center justify-center"><svg class="w-[16px] h-[16px]" viewBox="0 0 16 16"><path d="M3.500 1v6M2 8h3l.500 6h-4z" stroke="currentColor" fill="currentColor"/><path d="M9 2l1 3 2 1 2-1V2l1 2c0 3-1 4-3 4v7h-2V8C9 7 8.500 4 9 2z" fill="currentColor"/></svg></div>
          <div class="h-[26px] mt-[10px] rounded-l-[4px] bg-[#2f2f2f] flex items-center justify-center"><svg class="w-[16px] h-[16px]" viewBox="0 0 16 16"><path d="M1 5h14v9H1zM10 2h3v2h-3z" fill="currentColor"/><path d="M3 7h5M3 9.500h5M3 12h5" stroke="#333"/><circle cx="12" cy="8" r="1" fill="#333"/></svg></div>
          <div class="h-[26px] mt-[2px] rounded-l-[4px] bg-[#2f2f2f] flex items-center justify-center"><svg class="w-[16px] h-[16px]" viewBox="0 0 16 16"><path d="M3 1h10v4H3zM1 6h14v5h-2v4H3v-4H1z" fill="currentColor"/><path d="M5 9h6v4H5z" fill="#444"/></svg></div>
          <div class="h-[26px] mt-[2px] rounded-l-[4px] bg-[#2f2f2f] flex items-center justify-center"><svg class="w-[16px] h-[16px]"><use href="#layer"/></svg></div>
          <div class="h-[26px] mt-[2px] rounded-l-[4px] bg-[#3d3d3d] flex items-center justify-center text-white"><svg class="w-[16px] h-[16px]"><use href="#scene"/></svg></div>
          <div class="h-[26px] mt-[2px] rounded-l-[4px] bg-[#2f2f2f] flex items-center justify-center"><svg class="w-[16px] h-[16px]" viewBox="0 0 16 16"><circle cx="8" cy="8" r="5.500" fill="#c0535f"/><path d="M4 5c2 0 3 0 3 2s-3 1-2 4M9 3.500c1 2 3 2 3 3.500s-3 1-3 3" fill="none" stroke="#2f2f2f" stroke-width="1.200"/><path d="M1 11a9 9 0 0 0 13-9" fill="none" stroke="#c0535f"/></svg></div>
          <div class="h-[26px] mt-[10px] rounded-l-[4px] bg-[#2f2f2f] flex items-center justify-center text-[#c98a4b]"><svg class="w-[16px] h-[16px]"><use href="#obj"/></svg></div>
          <div class="h-[26px] mt-[2px] rounded-l-[4px] bg-[#2f2f2f] flex items-center justify-center"><svg class="w-[16px] h-[16px]" viewBox="0 0 16 16"><path d="M10 1c3 0 5 1 5 3 0 1-1 3-3 3L5 15H2l-1-2 7-7c0-3 0-5 2-5z" fill="#6f9bd8"/></svg></div>
          <div class="h-[26px] mt-[2px] rounded-l-[4px] bg-[#2f2f2f] flex items-center justify-center"><svg class="w-[16px] h-[16px]" viewBox="0 0 16 16"><path d="M3 3h12M3 3l10 10M3 3v9" fill="none" stroke="#6f9bd8"/><circle cx="3" cy="3" r="2.200" fill="#6f9bd8"/><circle cx="13" cy="13" r="2" fill="#6f9bd8"/><circle cx="3" cy="13" r="1" fill="#6f9bd8"/></svg></div>
          <div class="h-[26px] mt-[2px] rounded-l-[4px] bg-[#2f2f2f] flex items-center justify-center"><svg class="w-[16px] h-[16px]" viewBox="0 0 16 16"><path d="M13 11A6.500 6.500 0 1 1 9 2" fill="none" stroke="#6f9bd8" stroke-width="1.500"/><circle cx="7" cy="9" r="2.500" fill="#6f9bd8"/><circle cx="13" cy="3" r="1.500" fill="#6f9bd8"/></svg></div>
          <div class="h-[26px] mt-[2px] rounded-l-[4px] bg-[#2f2f2f] flex items-center justify-center"><svg class="w-[16px] h-[16px]" viewBox="0 0 16 16"><path d="M3 6L12 1c3 0 4 3 2 5l-4 7c-3 3-10 1-7-7z" fill="none" stroke="#6f9bd8" stroke-width="1.300"/><circle cx="7" cy="9" r="3" fill="none" stroke="#6f9bd8" stroke-width="1.300"/></svg></div>
          <div class="h-[26px] mt-[2px] rounded-l-[4px] bg-[#2f2f2f] flex items-center justify-center text-[#10b58c]"><svg class="w-[16px] h-[16px]"><use href="#mesh"/></svg></div>
          <div class="h-[26px] mt-[2px] rounded-l-[4px] bg-[#2f2f2f] flex items-center justify-center"><svg class="w-[16px] h-[16px]" viewBox="0 0 16 16"><circle cx="8" cy="8" r="7" fill="#c0535f"/><path d="M8 8H1a7 7 0 0 0 7 7z" fill="#e8e8e8"/><path d="M8 8h7a7 7 0 0 1-7 7z" fill="#333"/></svg></div>
          <div class="h-[26px] mt-[10px] rounded-l-[4px] bg-[#2f2f2f] flex items-center justify-center"><svg class="w-[15px] h-[15px]" viewBox="0 0 15 15"><path d="M0 0h15v15H0z" fill="#c0535f"/><path d="M3 0h3v3H3zM9 0h3v3H9zM0 3h3v3H0zM6 3h3v3H6zM12 3h3v3h-3zM3 6h3v3H3zM9 6h3v3H9zM0 9h3v3H0zM6 9h3v3H6zM12 9h3v3h-3zM3 12h3v3H3zM9 12h3v3H9z" fill="#2f2f2f"/></svg></div>
        </div>
        <!-- panels -->
        <div class="flex-1 bg-[#3d3d3d] flex flex-col text-[#c4c4c4] [text-shadow:1px_1px_1px_#2a2a2a]">
          <div class="h-[38px] shrink-0 flex items-center">
            <svg class="ml-[10px] w-[16px] h-[16px] text-[#e0e0e0]"><use href="#scene"/></svg>
            <span class="ml-[7px]">Scene</span>
            <svg class="ml-auto mr-[10px] w-[15px] h-[15px] text-[#888]" viewBox="0 0 16 16"><path d="M10 1l5 5-2 1-3 3 0 3-6-6 3 0 3-3zM5 10l-4 5" fill="none" stroke="currentColor"/></svg>
          </div>
          <div class="h-[22px] shrink-0 flex items-center">
            <span class="ml-[8px] w-0 h-0 border-x-[4px] border-t-[5px] border-x-transparent border-t-[#a0a0a0]"></span>
            <span class="ml-[6px] text-[11.8px]">Scene</span>
            <svg class="ml-auto mr-[7px] w-[11px] h-[5px] text-[#999]"><use href="#grip"/></svg>
          </div>
          <div class="h-[85px] shrink-0 bg-[#383838] flex flex-col gap-[6px] pt-[8px] pr-[8px]">
            <div class="h-[19px] flex items-center">
              <span class="w-[77px] pt-[2px] text-right">Camera</span>
              <div class="ml-[8px] flex-1 h-full rounded-[4px] bg-[#1d1d1d] border border-[#333] flex items-center justify-between px-[3px] text-[#e0e0e0]">
                <svg class="w-[14px] h-[14px]"><use href="#obj"/></svg>
                <svg class="w-[14px] h-[14px]" viewBox="0 0 16 16"><path d="M10 5l-7 7-1 2 2-1 7-7z" fill="none" stroke="currentColor"/><path d="M9 3l4 4 2-2c1-2-2-5-4-4z" fill="currentColor"/></svg>
              </div>
            </div>
            <div class="h-[19px] flex items-center">
              <span class="w-[77px] pt-[2px] text-right whitespace-nowrap">Background ...</span>
              <div class="ml-[8px] flex-1 h-full rounded-[4px] bg-[#1d1d1d] border border-[#333] flex items-center px-[3px] text-[#e0e0e0]">
                <svg class="w-[15px] h-[15px]"><use href="#scene"/></svg>
              </div>
            </div>
            <div class="h-[19px] flex items-center">
              <span class="w-[77px] pt-[2px] text-right">Active Clip</span>
              <div class="ml-[8px] flex-1 h-full rounded-[4px] bg-[#1d1d1d] border border-[#333] flex items-center px-[3px] text-[#e0e0e0]">
                <svg class="w-[15px] h-[15px]" viewBox="0 0 16 16"><path d="M2 7h12v7H2zM2 3h2v2H2zM6 2.500h2v2H6zM10 2h2v2h-2z" fill="currentColor"/></svg>
              </div>
            </div>
          </div>
          <div class="flex flex-col pt-[2px] text-[11.8px]">
            <div class="h-[24px] flex items-center"><span class="ml-[9px] w-0 h-0 border-y-[4px] border-l-[5px] border-y-transparent border-l-[#a0a0a0]"></span><span class="ml-[8px]">Units</span><svg class="ml-auto mr-[7px] w-[11px] h-[5px] text-[#999]"><use href="#grip"/></svg></div>
            <div class="h-[24px] flex items-center"><span class="ml-[9px] w-0 h-0 border-y-[4px] border-l-[5px] border-y-transparent border-l-[#a0a0a0]"></span><div class="ml-[6px] w-[12px] h-[12px] rounded-[2px] bg-[#4772b3] flex items-center justify-center"><svg class="w-[10px] h-[10px]" viewBox="0 0 10 10"><path d="M2 5l2 2.500 4-5" fill="none" stroke="#fff" stroke-width="1.500"/></svg></div><span class="ml-[4px]">Gravity</span><svg class="ml-auto mr-[7px] w-[11px] h-[5px] text-[#999]"><use href="#grip"/></svg></div>
            <div class="h-[24px] flex items-center"><span class="ml-[9px] w-0 h-0 border-y-[4px] border-l-[5px] border-y-transparent border-l-[#a0a0a0]"></span><span class="ml-[8px]">Keying Sets</span><svg class="ml-auto mr-[7px] w-[11px] h-[5px] text-[#999]"><use href="#grip"/></svg></div>
            <div class="h-[24px] flex items-center"><span class="ml-[9px] w-0 h-0 border-y-[4px] border-l-[5px] border-y-transparent border-l-[#a0a0a0]"></span><span class="ml-[8px]">Audio</span><svg class="ml-auto mr-[7px] w-[11px] h-[5px] text-[#999]"><use href="#grip"/></svg></div>
            <div class="h-[24px] flex items-center"><span class="ml-[9px] w-0 h-0 border-y-[4px] border-l-[5px] border-y-transparent border-l-[#a0a0a0]"></span><span class="ml-[8px]">Rigid Body World</span><svg class="ml-auto mr-[7px] w-[11px] h-[5px] text-[#999]"><use href="#grip"/></svg></div>
            <div class="h-[24px] flex items-center"><span class="ml-[9px] w-0 h-0 border-y-[4px] border-l-[5px] border-y-transparent border-l-[#a0a0a0]"></span><span class="ml-[8px]">Custom Properties</span><svg class="ml-auto mr-[7px] w-[11px] h-[5px] text-[#999]"><use href="#grip"/></svg></div>
          </div>
        </div>
      </div>
    </div>
  </div>
</div>

<!-- tooltip over viewport and outliner -->
<div class="absolute left-[1046px] top-[181px] w-[173px] h-[76px] rounded-[4px] bg-[#1b1b1b]/95 shadow-md pl-[13px] pt-[11px] flex flex-col gap-[5px] text-[10.9px] leading-[16px]">
  <div class="text-[#d0d0d0]">Click: Use a preset viewpoint</div>
  <div class="text-[#8e8e8e]">Shortcut: Ctrl Numpad 7</div>
  <div class="text-[#d0d0d0]">Drag: Rotate the view</div>
</div>

<script>
  // perspective floor grid, two vanishing points read off the axis lines
  const grid = document.getElementById('grid');
  const vp1 = [135, -687], vp2 = [3710, -472], origin = [595, 447];
  const alpha = 0.029;

  function addLine(x1, y1, x2, y2) {
    const l = document.createElementNS('http://www.w3.org/2000/svg', 'line');
    l.setAttribute('x1', x1); l.setAttribute('y1', y1);
    l.setAttribute('x2', x2); l.setAttribute('y2', y2);
    grid.appendChild(l);
  }

  for (let k = -40; k <= 40; k++) {
    const bx = 683 + 53 * k;
    const x = y => vp1[0] + (bx - vp1[0]) * (y - vp1[1]) / (665 - vp1[1]);
    addLine(x(50), 50, x(665), 665);
  }

  for (let u = -6; u <= 25; u++) {
    const w = 1 + alpha * u;
    const px = (origin[0] + alpha * u * vp1[0]) / w;
    const py = (origin[1] + alpha * u * vp1[1]) / w;
    const s = (vp2[1] - py) / (vp2[0] - px);
    addLine(0, py - s * px, 1128, py + s * (1128 - px));
  }
</script>
</body>
</html>
